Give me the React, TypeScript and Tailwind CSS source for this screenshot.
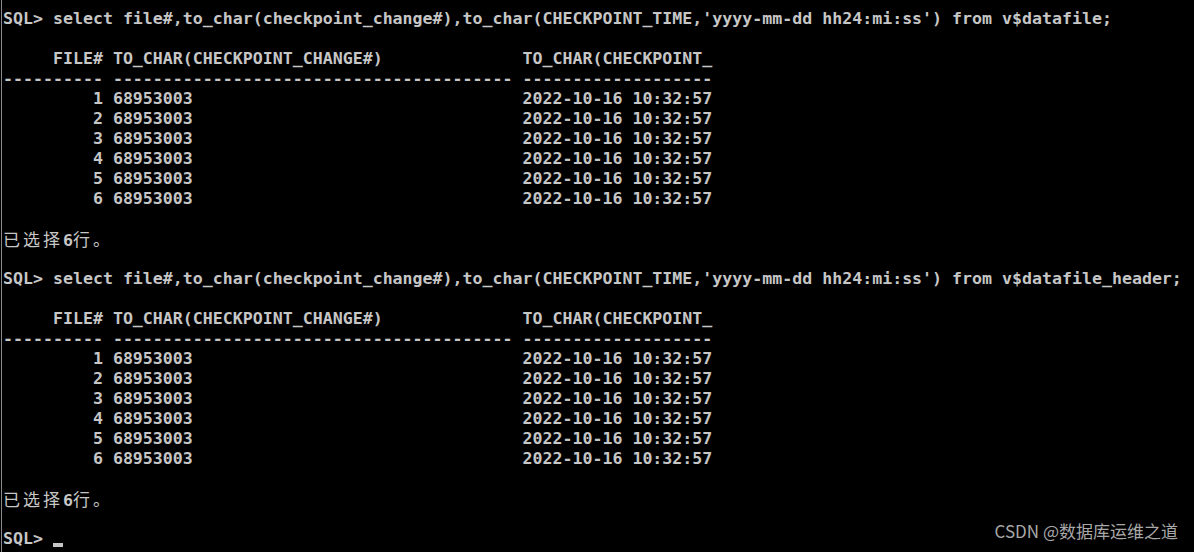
const pad = (s: string, n: number) => s + " ".repeat(Math.max(0, n - s.length));
const lpad = (s: string, n: number) => " ".repeat(Math.max(0, n - s.length)) + s;

const header = "     FILE# " + pad("TO_CHAR(CHECKPOINT_CHANGE#)", 40) + " TO_CHAR(CHECKPOINT_";
const dashes = "-".repeat(10) + " " + "-".repeat(40) + " " + "-".repeat(19);
const rows = [1, 2, 3, 4, 5, 6].map(
  (n) => lpad(String(n), 10) + " " + pad("68953003", 40) + " 2022-10-16 10:32:57"
);

function Line({ children }: { children?: React.ReactNode }) {
  return <div className="h-[20px] leading-[20px] whitespace-pre">{children ?? " "}</div>;
}

function Selected() {
  return (
    <Line>
      <span className="font-['Noto_Sans_CJK_SC',sans-serif] font-normal text-[17px] tracking-[3px]">已选择</span>
      6
      <span className="font-['Noto_Sans_CJK_SC',sans-serif] font-normal text-[17px] tracking-[3px]">行。</span>
    </Line>
  );
}

function Query({ view }: { view: string }) {
  return (
    <>
      <Line>{`SQL> select file#,to_char(checkpoint_change#),to_char(CHECKPOINT_TIME,'yyyy-mm-dd hh24:mi:ss') from ${view};`}</Line>
      <Line />
      <Line>{header}</Line>
      <Line>{dashes}</Line>
      {rows.map((r, i) => (
        <Line key={i}>{r}</Line>
      ))}
      <Line />
      <Selected />
      <Line />
    </>
  );
}

export default function App() {
  return (
    <div className="relative w-[1194px] h-[552px] overflow-hidden bg-black flex">
      <div className="w-[1px] ml-[1px] bg-[#8a8a8a] shrink-0" />
      <div className="pl-[1px] pt-[9px] text-[#c6c6c6] font-['DejaVu_Sans_Mono',monospace] font-bold text-[16.6px]">
        <Query view="v$datafile" />
        <Query view="v$datafile_header" />
        <Line>
          {"SQL> "}
          <span className="inline-block align-top w-[10px] h-[20px] relative">
            <span className="absolute left-0 top-[14px] w-[10px] h-[4px] bg-[#c6c6c6]" />
          </span>
        </Line>
      </div>
      <div className="absolute right-[16px] bottom-[9px] text-[#a8a8a8] text-[17px] font-['Noto_Sans_CJK_SC',sans-serif]">
        CSDN @数据库运维之道
      </div>
    </div>
  );
}
